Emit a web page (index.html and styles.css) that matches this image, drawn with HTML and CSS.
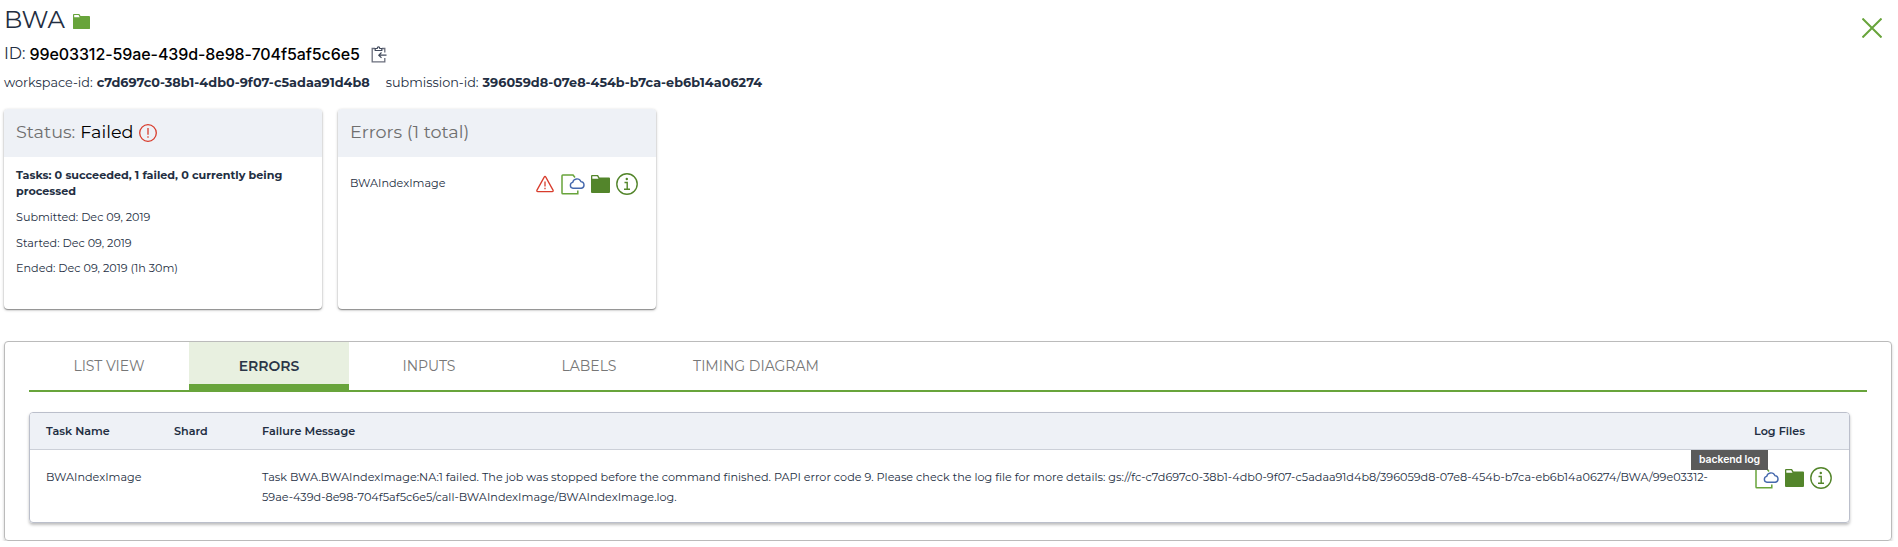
FILE: index.html
```
<!DOCTYPE html>
<html lang="en">
  <head>
    <meta charset="UTF-8" />
    <meta name="viewport" content="width=device-width, initial-scale=1.0" />
    <title>Job Manager - BWA</title>
    <link rel="stylesheet" href="styles.css">
  </head>
  <body>
    <!-- shared icons -->
    <svg class="icon-defs" width="0" height="0">
      <symbol id="folder" viewBox="0 0 19 18">
        <path fill="currentColor" d="M1 0h6l1.500 2.500H18a1 1 0 0 1 1 1V17a1 1 0 0 1-1 1H1a1 1 0 0 1-1-1V1a1 1 0 0 1 1-1z" />
        <path fill="#fff" d="M1.300 1.300h4.900l1.300 2.500H1.300z" />
      </symbol>
      <symbol id="log" viewBox="0 0 24 21">
        <path fill="none" stroke="#68a43b" stroke-width="1.500" d="M12.500 1H1.800Q1 1 1 1.800V19q0 .8.8.8h15V16.500" />
        <path fill="none" stroke="#68a43b" stroke-width="1.500" d="M12 1l2 2.500" />
        <path fill="#fff" stroke="#4568ad" stroke-width="1.400" d="M12 14.300a3 3 0 0 1-.3-5.900 4.300 4.300 0 0 1 8.200-.8 3.400 3.400 0 0 1 .5 6.700z" />
      </symbol>
      <symbol id="info" viewBox="0 0 22 22">
        <circle cx="11" cy="11" r="10.200" fill="none" stroke="currentColor" stroke-width="1.400" />
        <circle cx="10.800" cy="6" r="1.200" fill="currentColor" />
        <path fill="none" stroke="currentColor" stroke-width="1.400" d="M8.500 9.500h2.700v6.800M8 16.300h6" />
      </symbol>
    </svg>

    <header class="job-header">
      <h1>BWA <svg class="title-folder" viewBox="0 0 19 18" preserveAspectRatio="none"><use href="#folder" width="19" height="18" /></svg></h1>
      <div class="job-id">
        <span>ID:</span>
        <strong>99e03312-59ae-439d-8e98-704f5af5c6e5</strong>
        <svg class="clipboard" viewBox="0 0 16 17">
          <path fill="none" stroke="#6a6e7c" stroke-width="1.300" d="M4 2.500H1.200v13.300h12.600V12M13.800 6.500v-4H11" />
          <path fill="none" stroke="#414a5c" stroke-width="1.200" d="M4.200 4.500v-2h2Q6.300.8 7.500.8t1.300 1.700h2v2zM15.500 9.200H8M10.500 6.500L7.800 9.200l2.700 2.700" />
        </svg>
      </div>
      <div class="job-labels">
        <span>workspace-id:</span>
        <strong>c7d697c0-38b1-4db0-9f07-c5adaa91d4b8</strong>
        <span class="submission">submission-id:</span>
        <strong>396059d8-07e8-454b-b7ca-eb6b14a06274</strong>
      </div>
      <svg class="close" viewBox="0 0 20 20"><path d="M.5.5l19 19M19.500.5l-19 19" /></svg>
    </header>

    <section class="cards">
      <div class="card">
        <div class="card-header">
          <span>Status:</span>
          <span class="status-value">Failed</span>
          <svg class="failed-icon" viewBox="0 0 18 18">
            <circle cx="9" cy="9" r="8.300" />
            <path d="M9 4v6.800M9 12.300v1.500" />
          </svg>
        </div>
        <div class="card-body">
          <p class="tasks">Tasks: 0 succeeded, 1 failed, 0 currently being<br>processed</p>
          <p>Submitted: Dec 09, 2019</p>
          <p>Started: Dec 09, 2019</p>
          <p>Ended: Dec 09, 2019 (1h 30m)</p>
        </div>
      </div>
      <div class="card">
        <div class="card-header">Errors (1 total)</div>
        <div class="card-body error-row">
          <span class="task-name">BWAIndexImage</span>
          <div class="icons">
            <svg class="warning" viewBox="0 0 18 17">
              <path d="M8.200 1.600q.8-1.300 1.600 0l7.200 13q.6 1.500-.9 1.600H1.900q-1.500-.1-.9-1.600zM9 6v5M9 12.300v1.500" />
            </svg>
            <svg class="log"><use href="#log" /></svg>
            <svg class="folder"><use href="#folder" /></svg>
            <svg class="info"><use href="#info" /></svg>
          </div>
        </div>
      </div>
    </section>

    <main class="panel">
      <nav class="tabs">
        <a class="tab">LIST VIEW</a>
        <a class="tab active">ERRORS</a>
        <a class="tab">INPUTS</a>
        <a class="tab">LABELS</a>
        <a class="tab wide">TIMING DIAGRAM</a>
      </nav>
      <div class="table">
        <div class="row head">
          <div>Task Name</div>
          <div>Shard</div>
          <div>Failure Message</div>
          <div>Log Files</div>
        </div>
        <div class="row">
          <div>BWAIndexImage</div>
          <div></div>
          <div class="message">Task BWA.BWAIndexImage:NA:1 failed. The job was stopped before the command finished. PAPI error code 9. Please check the log file for more details: gs://fc-c7d697c0-38b1-4db0-9f07-c5adaa91d4b8/396059d8-07e8-454b-b7ca-eb6b14a06274/BWA/99e03312-<br>59ae-439d-8e98-704f5af5c6e5/call-BWAIndexImage/BWAIndexImage.log.</div>
          <div class="icons">
            <svg class="log"><use href="#log" /></svg>
            <svg class="folder"><use href="#folder" /></svg>
            <svg class="info"><use href="#info" /></svg>
            <span class="tooltip">backend log</span>
          </div>
        </div>
      </div>
    </main>
  </body>
</html>
```
FILE: styles.css
```
* {
  box-sizing: border-box;
}
body {
  margin: 0;
  font-family: Montserrat, Inter, sans-serif;
  font-size: 11.2px;
  color: #232e42;
  background: #fff;
  white-space: nowrap;
}
svg {
  display: block;
  flex: none;
}
.icon-defs {
  position: absolute;
}
.job-header {
  position: relative;
  padding-left: 4px;
}
h1 {
  display: flex;
  align-items: center;
  gap: 8px;
  height: 38px;
  margin: 0;
  line-height: 40px;
  font-size: 24.3px;
  font-weight: 400;
}
.title-folder {
  width: 17px;
  height: 15px;
  margin-top: 5px;
  color: #68a43b;
}
.job-id {
  display: flex;
  gap: 4px;
  font-size: 16px;
  line-height: 32px;
}
.job-id strong {
  font-family: Inter, sans-serif;
  font-weight: 500;
  letter-spacing: -0.09px;
  color: #000;
}
.clipboard {
  width: 16px;
  height: 17px;
  margin: 8px 0 0 7px;
}
.job-labels {
  display: flex;
  gap: 4px;
  height: 24px;
  font-size: 12.8px;
  line-height: 26px;
}
.submission {
  margin-left: 12px;
}
.close {
  position: absolute;
  top: 18px;
  right: 16px;
  width: 20px;
  height: 20px;
  stroke: #68a43b;
  stroke-width: 2;
}
.cards {
  display: flex;
  gap: 16px;
  padding: 15px 4px 0;
}
.card {
  width: 318px;
  height: 200px;
  border-radius: 4px;
  box-shadow: 0 1px 3px rgba(0, 0, 0, 0.3), 0 1px 1px rgba(0, 0, 0, 0.3);
}
.card-header {
  display: flex;
  gap: 5px;
  height: 48px;
  padding: 0 12px;
  border-radius: 4px 4px 0 0;
  background: #eef1f6;
  color: #6f6f6f;
  font-size: 17.6px;
  line-height: 46px;
}
.status-value {
  color: #000;
}
.failed-icon,
.warning {
  width: 18px;
  height: 18px;
  fill: none;
  stroke: #d83c2c;
  stroke-width: 1.3;
}
.failed-icon {
  margin: 15px 0 0 1px;
}
.card-body {
  padding: 10px 12px;
}
.card-body p {
  margin: 0 0 9.6px;
  line-height: 16px;
}
.card-body .tasks {
  margin-bottom: 10px;
  font-weight: 700;
}
.error-row {
  display: flex;
  justify-content: space-between;
  padding: 15px 18px 0 12px;
}
.task-name {
  line-height: 22px;
}
.icons {
  display: flex;
  align-items: center;
  gap: 6px;
  height: 24px;
  color: #53852b;
}
.warning {
  margin-right: 1px;
}
.log {
  width: 24px;
  height: 21px;
}
.folder {
  width: 19px;
  height: 18px;
}
.info {
  width: 22px;
  height: 22px;
}
.panel {
  height: 200px;
  margin: 32px 6px 0 4px;
  padding: 0 24px;
  border: 1px solid #bbb;
  border-radius: 4px;
  box-shadow: 0 2px 3px rgba(0, 0, 0, 0.2);
}
.tabs {
  display: flex;
  height: 50px;
  border-bottom: 2px solid #68a43b;
  font-size: 14px;
  line-height: 48px;
}
.tab {
  width: 160px;
  text-align: center;
  color: #777;
}
.tab.wide {
  width: 174px;
}
.tab.active {
  background: #e8f0e0;
  border-bottom: 6px solid #68a43b;
  color: #2b3648;
  font-weight: 600;
}
.table {
  margin: 20px 17px 0 0;
  height: 111px;
  border: 1px solid #bbbfcb;
  border-radius: 4px;
  box-shadow: 0 2px 3px rgba(0, 0, 0, 0.25);
}
.row {
  display: grid;
  grid-template-columns: 128px 88px minmax(0, 1fr) 95px;
  padding: 17px 0 0 16px;
  line-height: 20px;
}
.row.head {
  height: 37px;
  padding-top: 8px;
  border-bottom: 1px solid #ccd0d8;
  border-radius: 3px 3px 0 0;
  background: #eef1f6;
  font-weight: 600;
}
.message {
  font-size: 11.22px;
  letter-spacing: 0.01px;
}
.row .icons {
  position: relative;
  margin: -1px 0 0 1px;
}
.tooltip {
  position: absolute;
  top: -16px;
  left: -64px;
  width: 77px;
  height: 20px;
  background: #5a5a5a;
  color: #fff;
  font-family: Inter, sans-serif;
  font-size: 10.5px;
  font-weight: 600;
  letter-spacing: -0.1px;
  text-align: center;
}
```
